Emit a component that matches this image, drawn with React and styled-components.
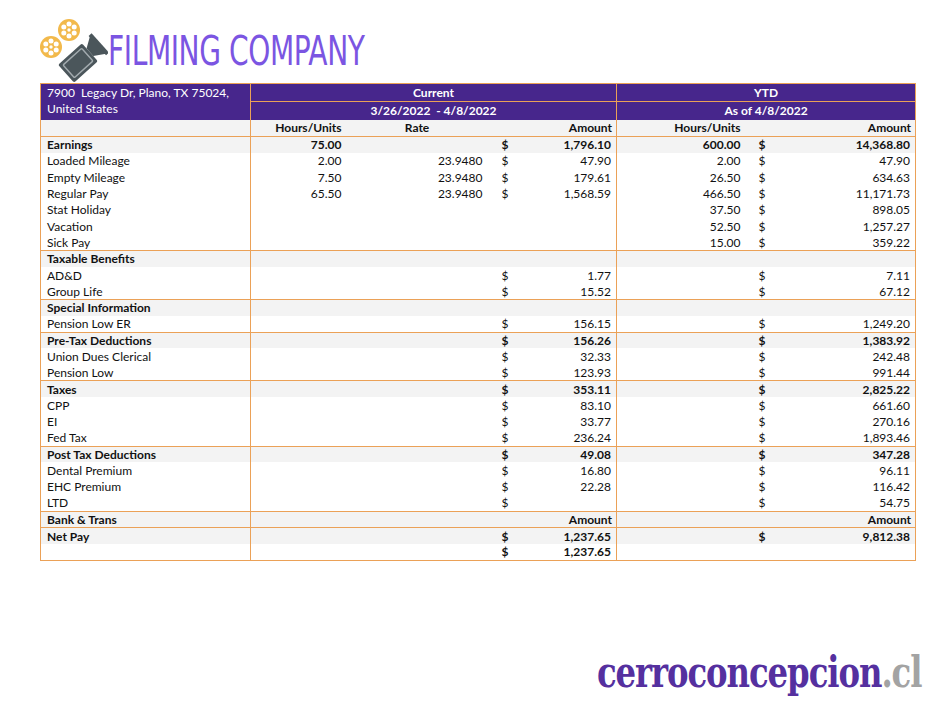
import styled, { createGlobalStyle } from "styled-components";

const GlobalStyle = createGlobalStyle`
    body {
        margin: 0;
        background: #ffffff;
        font-family: Lato, "Liberation Sans", sans-serif;
        color: #111111;
    }
`;

const ORANGE = "#eba157";
const PURPLE = "#47268c";

const Page = styled.div`
    width: 945px;
    height: 723px;
    padding: 16px 0 0 40px;
    box-sizing: border-box;
    display: flex;
    flex-direction: column;
`;

const Brand = styled.div`
    display: flex;
    align-items: center;
    height: 66px;
    margin-left: -4px;
`;

const BrandName = styled.div`
    font-family: "DejaVu Sans Condensed", "DejaVu Sans", sans-serif;
    font-size: 40px;
    color: #7b55e2;
    letter-spacing: -0.5px;
    transform: scaleX(0.78);
    transform-origin: left center;
    white-space: nowrap;
    margin-top: 4px;
`;

const Sheet = styled.table`
    border-collapse: collapse;
    table-layout: fixed;
    width: 875px;
    margin-top: 1px;
    border: 1px solid ${ORANGE};
    font-size: 12px;
`;

const HeadRow = styled.tr`
    background: ${PURPLE};
    color: #ffffff;
    height: 18px;
`;

const AddressCell = styled.td`
    vertical-align: top;
    padding: 1px 6px 0;
    line-height: 16px;
    border-right: 1px solid ${ORANGE};
`;

const PeriodCell = styled.td`
    text-align: center;
    font-weight: 700;
    padding: 0;
    line-height: 17px;
    border-right: ${(p) => (p.$divider ? `1px solid ${ORANGE}` : "none")};
    border-bottom: ${(p) => (p.$underline ? `1px solid ${ORANGE}` : "none")};
`;

const Row = styled.tr`
    height: 16.3px;
    background: ${(p) => (p.$shade ? "#f3f3f3" : "#ffffff")};
    border-top: ${(p) => (p.$rule ? `1px solid ${ORANGE}` : "none")};
    font-weight: ${(p) => (p.$bold ? 700 : 400)};
`;

const Cell = styled.td`
    padding: 0 4px 0 6px;
    line-height: 15px;
    white-space: nowrap;
    overflow: hidden;
    text-align: ${(p) => p.$align || "left"};
    border-right: ${(p) => (p.$divider ? `1px solid ${ORANGE}` : "none")};
`;

const Money = styled.div`
    display: flex;
    justify-content: space-between;
    padding-left: ${(p) => p.$indent}px;
    padding-right: 1px;
`;

const Footer = styled.div`
    display: flex;
    justify-content: flex-end;
    padding-right: 24px;
    margin-top: 87px;
`;

const Watermark = styled.div`
    font-family: "DejaVu Serif", "Liberation Serif", serif;
    font-weight: 700;
    font-size: 42px;
    letter-spacing: -1.4px;
    color: #55309f;
    transform: scaleX(0.77);
    transform-origin: right center;
    white-space: nowrap;

    span {
        color: #a3a3a3;
    }
`;

const Reel = ({ cx, cy }) => (
    <g>
        <circle cx={cx} cy={cy} r="11" fill="#f2b94b" />
        <circle cx={cx} cy={cy} r="1.7" fill="#ffffff" />
        {[0, 60, 120, 180, 240, 300].map((a) => (
            <circle
                key={a}
                cx={cx + 6 * Math.cos(((a + 30) * Math.PI) / 180)}
                cy={cy + 6 * Math.sin(((a + 30) * Math.PI) / 180)}
                r="2.5"
                fill="#ffffff"
            />
        ))}
    </g>
);

const Logo = () => (
    <svg width="72" height="66" viewBox="0 0 72 66">
        <Reel cx={33} cy={14} />
        <Reel cx={15} cy={31} />
        <g transform="rotate(-42 42 47)">
            <rect x="26" y="35" width="32" height="24" rx="2" fill="#4b565b" />
            <rect x="29.5" y="38.5" width="25" height="17" rx="1" fill="none" stroke="#a3abaf" strokeWidth="1.4" />
            <polygon points="58,42 69,35 69,59 58,52" fill="#4b565b" />
            <rect x="68" y="34" width="4" height="26" fill="#4b565b" />
        </g>
    </svg>
);

const rows = [
    { label: "Earnings", section: true, hours: "75.00", amt: "1,796.10", yHours: "600.00", yAmt: "14,368.80" },
    { label: "Loaded Mileage", hours: "2.00", rate: "23.9480", amt: "47.90", yHours: "2.00", yAmt: "47.90" },
    { label: "Empty Mileage", hours: "7.50", rate: "23.9480", amt: "179.61", yHours: "26.50", yAmt: "634.63" },
    { label: "Regular Pay", hours: "65.50", rate: "23.9480", amt: "1,568.59", yHours: "466.50", yAmt: "11,171.73" },
    { label: "Stat Holiday", yHours: "37.50", yAmt: "898.05" },
    { label: "Vacation", yHours: "52.50", yAmt: "1,257.27" },
    { label: "Sick Pay", yHours: "15.00", yAmt: "359.22" },
    { label: "Taxable Benefits", section: true },
    { label: "AD&D", amt: "1.77", yAmt: "7.11" },
    { label: "Group Life", amt: "15.52", yAmt: "67.12" },
    { label: "Special Information", section: true },
    { label: "Pension Low ER", amt: "156.15", yAmt: "1,249.20" },
    { label: "Pre-Tax Deductions", section: true, amt: "156.26", yAmt: "1,383.92" },
    { label: "Union Dues Clerical", amt: "32.33", yAmt: "242.48" },
    { label: "Pension Low", amt: "123.93", yAmt: "991.44" },
    { label: "Taxes", section: true, amt: "353.11", yAmt: "2,825.22" },
    { label: "CPP", amt: "83.10", yAmt: "661.60" },
    { label: "EI", amt: "33.77", yAmt: "270.16" },
    { label: "Fed Tax", amt: "236.24", yAmt: "1,893.46" },
    { label: "Post Tax Deductions", section: true, amt: "49.08", yAmt: "347.28" },
    { label: "Dental Premium", amt: "16.80", yAmt: "96.11" },
    { label: "EHC Premium", amt: "22.28", yAmt: "116.42" },
    { label: "LTD", amt: "", yAmt: "54.75" },
    { label: "Bank & Trans", section: true, amtText: "Amount", yAmtText: "Amount" },
    { label: "Net Pay", section: true, amt: "1,237.65", yAmt: "9,812.38" },
    { label: "", bold: true, amt: "1,237.65" },
];

const AmountCell = ({ value, text, indent, divider }) => (
    <Cell $align="right" $divider={divider}>
        {text ? (
            text
        ) : value !== undefined ? (
            <Money $indent={indent}>
                <span>$</span>
                <span>{value}</span>
            </Money>
        ) : null}
    </Cell>
);

export default function App() {
    return (
        <Page>
            <GlobalStyle />
            <Brand>
                <Logo />
                <BrandName>FILMING COMPANY</BrandName>
            </Brand>

            <Sheet>
                <colgroup>
                    <col style={{ width: 210 }} />
                    <col style={{ width: 95 }} />
                    <col style={{ width: 141 }} />
                    <col style={{ width: 130 }} />
                    <col style={{ width: 128 }} />
                    <col style={{ width: 171 }} />
                </colgroup>
                <thead>
                    <HeadRow>
                        <AddressCell rowSpan={2}>
                            7900&nbsp; Legacy Dr, Plano, TX 75024,
                            <br />
                            United States
                        </AddressCell>
                        <PeriodCell colSpan={3} $divider $underline>
                            Current
                        </PeriodCell>
                        <PeriodCell colSpan={2} $underline>
                            YTD
                        </PeriodCell>
                    </HeadRow>
                    <HeadRow>
                        <PeriodCell colSpan={3} $divider>
                            3/26/2022&nbsp; - 4/8/2022
                        </PeriodCell>
                        <PeriodCell colSpan={2}>As of 4/8/2022</PeriodCell>
                    </HeadRow>
                    <Row $shade $bold style={{ height: 17 }}>
                        <Cell $divider />
                        <Cell $align="right">Hours/Units</Cell>
                        <Cell $align="center">Rate</Cell>
                        <Cell $align="right" $divider>
                            Amount
                        </Cell>
                        <Cell $align="right">Hours/Units</Cell>
                        <Cell $align="right">Amount</Cell>
                    </Row>
                </thead>
                <tbody>
                    {rows.map((r, i) => (
                        <Row key={i} $shade={r.section} $rule={r.section} $bold={r.section || r.bold}>
                            <Cell $divider>{r.label}</Cell>
                            <Cell $align="right">{r.hours}</Cell>
                            <Cell $align="right">{r.rate}</Cell>
                            <AmountCell value={r.amt} text={r.amtText} indent={9} divider />
                            <Cell $align="right">{r.yHours}</Cell>
                            <AmountCell value={r.yAmt} text={r.yAmtText} indent={8} />
                        </Row>
                    ))}
                </tbody>
            </Sheet>

            <Footer>
                <Watermark>
                    cerroconcepcion<span>.cl</span>
                </Watermark>
            </Footer>
        </Page>
    );
}
